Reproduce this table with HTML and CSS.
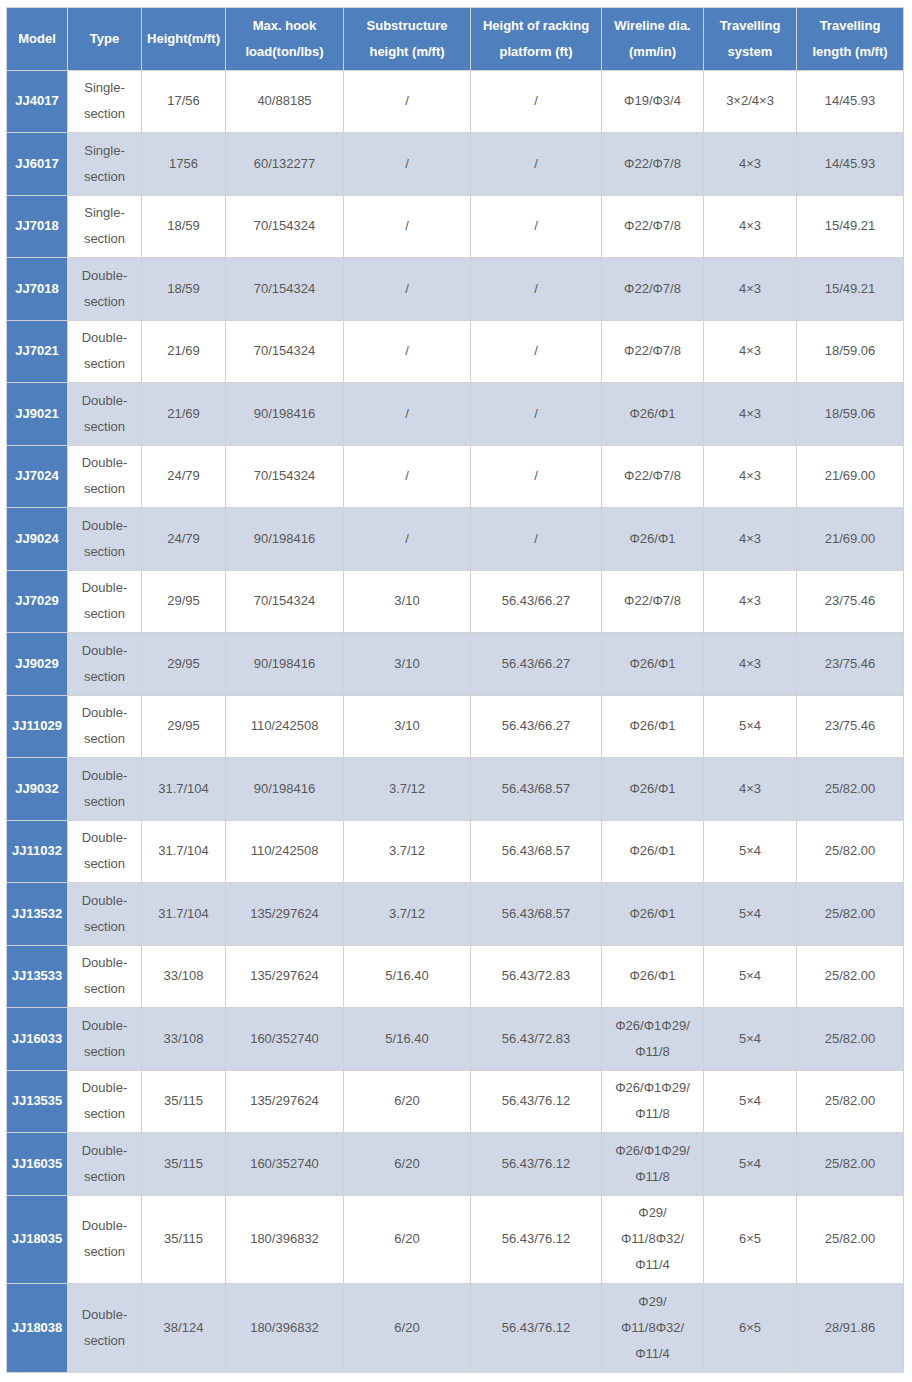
FILE: index.html
```html
<!DOCTYPE html>
<html>
<head>
<meta charset="utf-8">
<link rel="stylesheet" href="styles.css">
</head>
<body>
<table class="spec">
<colgroup>
<col class="c1"><col class="c2"><col class="c3"><col class="c4"><col class="c5"><col class="c6"><col class="c7"><col class="c8"><col class="c9">
</colgroup>
<thead>
<tr>
<th>Model</th><th>Type</th><th>Height(m/ft)</th><th>Max. hook<br>load(ton/lbs)</th><th>Substructure<br>height (m/ft)</th><th>Height of racking<br>platform (ft)</th><th>Wireline dia.<br>(mm/in)</th><th>Travelling<br>system</th><th>Travelling<br>length (m/ft)</th>
</tr>
</thead>
<tbody>
<tr><td class="m">JJ4017</td><td>Single-<br>section</td><td>17/56</td><td>40/88185</td><td>/</td><td>/</td><td>Φ19/Φ3/4</td><td>3×2/4×3</td><td>14/45.93</td></tr>
<tr class="alt"><td class="m">JJ6017</td><td>Single-<br>section</td><td>1756</td><td>60/132277</td><td>/</td><td>/</td><td>Φ22/Φ7/8</td><td>4×3</td><td>14/45.93</td></tr>
<tr><td class="m">JJ7018</td><td>Single-<br>section</td><td>18/59</td><td>70/154324</td><td>/</td><td>/</td><td>Φ22/Φ7/8</td><td>4×3</td><td>15/49.21</td></tr>
<tr class="alt"><td class="m">JJ7018</td><td>Double-<br>section</td><td>18/59</td><td>70/154324</td><td>/</td><td>/</td><td>Φ22/Φ7/8</td><td>4×3</td><td>15/49.21</td></tr>
<tr><td class="m">JJ7021</td><td>Double-<br>section</td><td>21/69</td><td>70/154324</td><td>/</td><td>/</td><td>Φ22/Φ7/8</td><td>4×3</td><td>18/59.06</td></tr>
<tr class="alt"><td class="m">JJ9021</td><td>Double-<br>section</td><td>21/69</td><td>90/198416</td><td>/</td><td>/</td><td>Φ26/Φ1</td><td>4×3</td><td>18/59.06</td></tr>
<tr><td class="m">JJ7024</td><td>Double-<br>section</td><td>24/79</td><td>70/154324</td><td>/</td><td>/</td><td>Φ22/Φ7/8</td><td>4×3</td><td>21/69.00</td></tr>
<tr class="alt"><td class="m">JJ9024</td><td>Double-<br>section</td><td>24/79</td><td>90/198416</td><td>/</td><td>/</td><td>Φ26/Φ1</td><td>4×3</td><td>21/69.00</td></tr>
<tr><td class="m">JJ7029</td><td>Double-<br>section</td><td>29/95</td><td>70/154324</td><td>3/10</td><td>56.43/66.27</td><td>Φ22/Φ7/8</td><td>4×3</td><td>23/75.46</td></tr>
<tr class="alt"><td class="m">JJ9029</td><td>Double-<br>section</td><td>29/95</td><td>90/198416</td><td>3/10</td><td>56.43/66.27</td><td>Φ26/Φ1</td><td>4×3</td><td>23/75.46</td></tr>
<tr><td class="m">JJ11029</td><td>Double-<br>section</td><td>29/95</td><td>110/242508</td><td>3/10</td><td>56.43/66.27</td><td>Φ26/Φ1</td><td>5×4</td><td>23/75.46</td></tr>
<tr class="alt"><td class="m">JJ9032</td><td>Double-<br>section</td><td>31.7/104</td><td>90/198416</td><td>3.7/12</td><td>56.43/68.57</td><td>Φ26/Φ1</td><td>4×3</td><td>25/82.00</td></tr>
<tr><td class="m">JJ11032</td><td>Double-<br>section</td><td>31.7/104</td><td>110/242508</td><td>3.7/12</td><td>56.43/68.57</td><td>Φ26/Φ1</td><td>5×4</td><td>25/82.00</td></tr>
<tr class="alt"><td class="m">JJ13532</td><td>Double-<br>section</td><td>31.7/104</td><td>135/297624</td><td>3.7/12</td><td>56.43/68.57</td><td>Φ26/Φ1</td><td>5×4</td><td>25/82.00</td></tr>
<tr><td class="m">JJ13533</td><td>Double-<br>section</td><td>33/108</td><td>135/297624</td><td>5/16.40</td><td>56.43/72.83</td><td>Φ26/Φ1</td><td>5×4</td><td>25/82.00</td></tr>
<tr class="alt"><td class="m">JJ16033</td><td>Double-<br>section</td><td>33/108</td><td>160/352740</td><td>5/16.40</td><td>56.43/72.83</td><td>Φ26/Φ1Φ29/<br>Φ11/8</td><td>5×4</td><td>25/82.00</td></tr>
<tr><td class="m">JJ13535</td><td>Double-<br>section</td><td>35/115</td><td>135/297624</td><td>6/20</td><td>56.43/76.12</td><td>Φ26/Φ1Φ29/<br>Φ11/8</td><td>5×4</td><td>25/82.00</td></tr>
<tr class="alt"><td class="m">JJ16035</td><td>Double-<br>section</td><td>35/115</td><td>160/352740</td><td>6/20</td><td>56.43/76.12</td><td>Φ26/Φ1Φ29/<br>Φ11/8</td><td>5×4</td><td>25/82.00</td></tr>
<tr><td class="m">JJ18035</td><td>Double-<br>section</td><td>35/115</td><td>180/396832</td><td>6/20</td><td>56.43/76.12</td><td>Φ29/<br>Φ11/8Φ32/<br>Φ11/4</td><td>6×5</td><td>25/82.00</td></tr>
<tr class="alt"><td class="m">JJ18038</td><td>Double-<br>section</td><td>38/124</td><td>180/396832</td><td>6/20</td><td>56.43/76.12</td><td>Φ29/<br>Φ11/8Φ32/<br>Φ11/4</td><td>6×5</td><td>28/91.86</td></tr>
</tbody>
</table>
</body>
</html>
```
FILE: styles.css
```css
html, body {
  margin: 0;
  padding: 0;
  background: #ffffff;
}
body {
  padding: 7px 0 0 6px;
  font-family: "Liberation Sans", Arial, sans-serif;
}
.spec {
  border-collapse: collapse;
  table-layout: fixed;
  width: 897px;
  font-size: 13px;
  line-height: 26px;
  color: #595959;
}
.c1 { width: 61px; }
.c2 { width: 74px; }
.c3 { width: 84px; }
.c4 { width: 118px; }
.c5 { width: 127px; }
.c6 { width: 131px; }
.c7 { width: 102px; }
.c8 { width: 93px; }
.c9 { width: 107px; }
.spec th, .spec td {
  border: 1px solid #d2d2d2;
  padding: 4.75px 2px;
  text-align: center;
  vertical-align: middle;
}
.spec th {
  background: #4f7fbd;
  color: #ffffff;
  font-weight: bold;
}
.spec td.m {
  background: #4f7fbd;
  color: #ffffff;
  font-weight: bold;
}
.spec tr.alt td {
  background: #d0d8e7;
}
.spec tr.alt td.m {
  background: #4f7fbd;
}
```
